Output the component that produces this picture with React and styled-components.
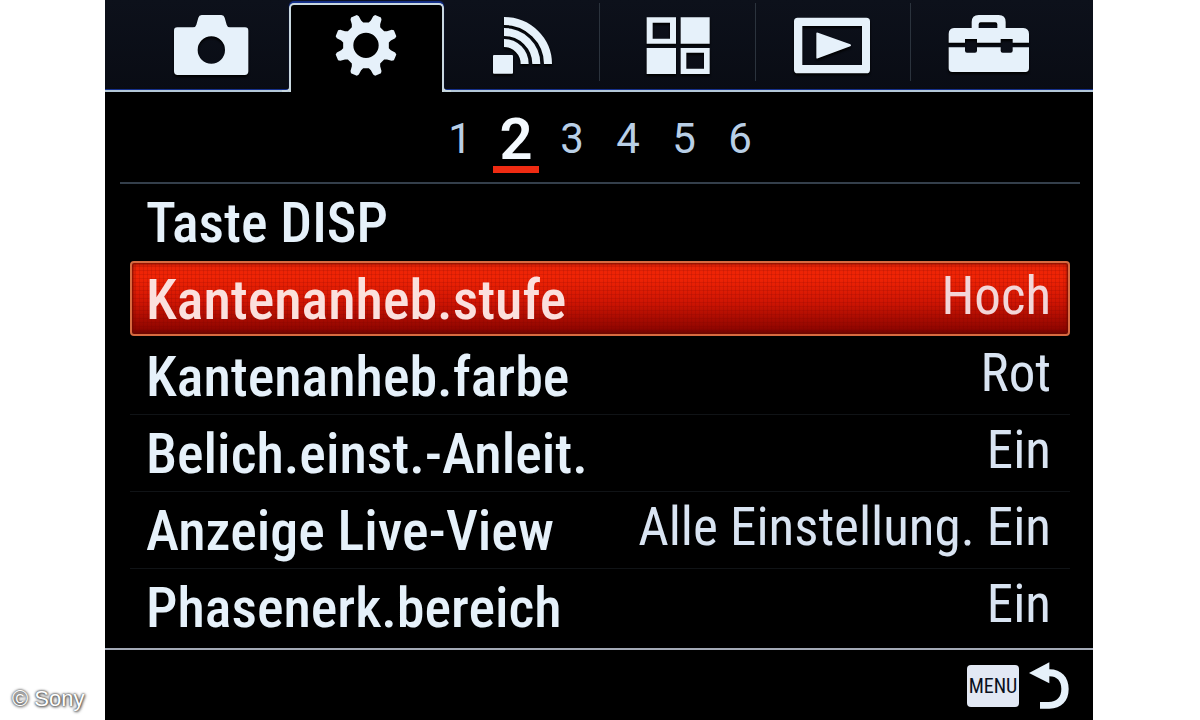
import React, { useState } from "react";
import styled, { createGlobalStyle, css } from "styled-components";

const ink = "#e6f1fa";
const narrow = `"Roboto Condensed", "Arial Narrow", "Liberation Sans", sans-serif`;
const regular = `Roboto, "Liberation Sans", Arial, sans-serif`;

const GlobalStyle = createGlobalStyle`
  * { box-sizing: border-box; }
  body { margin: 0; background: #fff; font-family: ${regular}; }
  button { margin: 0; padding: 0; border: 0; background: none; color: inherit; font: inherit; cursor: pointer; }
`;

const Page = styled.div`
  position: relative;
  min-height: 100vh;
  padding: 0 107px 0 105px;
  display: flex;
`;

const Screen = styled.main`
  flex: 1;
  min-width: 0;
  display: flex;
  flex-direction: column;
  background: #000;
  color: ${ink};
`;

const TabBar = styled.nav`
  display: grid;
  grid-template-columns: repeat(6, 1fr);
  height: 92px;
  padding: 0 26px 0 28px;
  background: linear-gradient(#0d111b, #090c14);
  box-shadow: inset 0 -2px #b4c8d8, inset 0 -3px #15308a;
`;

const activeTab = css`
  margin-top: 3px;
  background: #000;
  border: 2px solid #c9d8e0;
  border-bottom: 0;
  border-radius: 5px 5px 0 0;
  box-shadow: 0 -2px 1px #14308c;

  &::before,
  &::after {
    content: "";
    position: absolute;
    bottom: 0;
    width: 7px;
    height: 7px;
    border-bottom: 2px solid #c9d8e0;
  }
  &::before {
    right: 100%;
    border-right: 2px solid #c9d8e0;
    border-bottom-right-radius: 5px;
  }
  &::after {
    left: 100%;
    border-left: 2px solid #c9d8e0;
    border-bottom-left-radius: 5px;
  }
`;

const Tab = styled.button`
  position: relative;
  display: flex;
  justify-content: center;
  align-items: flex-start;

  svg {
    margin-top: ${(p) => (p.$active ? 8 : 13)}px;
    filter: drop-shadow(0 2px 1px #000);
  }
  ${(p) => p.$active && activeTab}
`;

const Divider = styled.span`
  position: absolute;
  right: 0;
  top: 3px;
  width: 1px;
  height: 78px;
  background: #2b333d;
`;

const Pager = styled.div`
  display: flex;
  justify-content: center;
  height: 92px;
  margin: 0 13px 0 15px;
  padding-top: 19px;
  border-bottom: 2px solid #343f4b;
`;

const PageButton = styled.button`
  display: flex;
  justify-content: center;
  width: 56px;
  color: ${(p) => (p.$active ? "#f4faff" : "#b9cfe6")};

  span {
    width: 46px;
    height: 62px;
    font-size: ${(p) => (p.$active ? 58 : 42)}px;
    font-weight: ${(p) => (p.$active ? 600 : 400)};
    line-height: 56px;
    border-bottom: 7px solid ${(p) => (p.$active ? "#ef2b12" : "transparent")};
  }
`;

const List = styled.ul`
  list-style: none;
  margin: 0;
  padding: 0 23px 2px 25px;
`;

const Item = styled.li`
  height: 77px;
  border-bottom: 1px solid ${(p) => (p.$line ? "#101316" : "transparent")};
`;

const Row = styled.button`
  display: flex;
  justify-content: space-between;
  align-items: flex-start;
  width: 100%;
  height: 75px;
  padding: 0 17px 0 14px;
  border: 2px solid transparent;
  border-radius: 4px;
  font-family: ${narrow};
  white-space: nowrap;
  text-align: left;

  ${(p) =>
    p.$selected &&
    css`
      border-color: #d86a40;
      color: #fbe0dd;
      background:
        repeating-linear-gradient(90deg, #0000 0 3px, #70000026 3px 4px),
        repeating-linear-gradient(#0000 0 3px, #70000026 3px 4px),
        linear-gradient(#e92407, #f02405 20%, #cf1503 55%, #920600 92%, #700300);
      background-clip: padding-box;
      box-shadow: inset 0 0 3px 1px #6c0a00;
    `}
`;

const Label = styled.span`
  font-size: 56px;
  font-weight: 500;
  line-height: 74px;
`;

const Value = styled.span`
  font-size: 53px;
  line-height: 66px;
  color: ${(p) => (p.$selected ? "#f3d6d8" : "#d9e4f2")};
`;

const Footer = styled.footer`
  flex: 1;
  display: flex;
  justify-content: flex-end;
  align-items: flex-start;
  min-height: 72px;
  padding: 12px 24px 0 0;
  border-top: 2px solid #a3a9b6;
`;

const BackButton = styled.button`
  display: flex;
  align-items: center;
  gap: 10px;
`;

const MenuBadge = styled.span`
  width: 52px;
  border-radius: 4px;
  background: #e2e8f4;
  color: #0a1020;
  font-family: ${narrow};
  font-size: 20px;
  line-height: 42px;
  text-align: center;
`;

const Credit = styled.small`
  position: absolute;
  left: 12px;
  bottom: 9px;
  color: #fff;
  font-family: "Liberation Sans", Arial, sans-serif;
  font-size: 22px;
  line-height: 24px;
  text-shadow: 0 0 2px #444, 0 0 3px #555, 1px 1px 3px #666;
`;

const Icon = ({ x, children }) => (
  <svg width="84" height="64" viewBox={`${x} 39 252 192`} fill={ink} aria-hidden="true">
    {children}
  </svg>
);

const CameraIcon = () => (
  <Icon x={207}>
    <path
      fillRule="evenodd"
      d="M232 82H279Q287 82 289 74L295 53Q297 45 305 45H364Q372 45 374 53L380 74Q382 82 390 82H435Q445 82 445 92V214Q445 225 434 225H233Q222 225 222 214V92Q222 82 232 82ZM334 109A41 41 0 1 0 334 191A41 41 0 1 0 334 109Z"
    />
  </Icon>
);

const point = (radius, angle) =>
  `${(802 + radius * Math.cos(angle)).toFixed(1)} ${(136 + radius * Math.sin(angle)).toFixed(1)}`;

const gearOutline = Array.from({ length: 8 }, (_, i) => {
  const a = ((i + 0.5) * Math.PI) / 4;
  return [
    point(69, a - 0.27),
    point(76, a - 0.2),
    point(90, a - 0.15),
    point(95, a - 0.1),
    point(95, a + 0.1),
    point(90, a + 0.15),
    point(76, a + 0.2),
    point(69, a + 0.27),
  ].join("L");
}).join("L");

const GearIcon = () => (
  <Icon x={676}>
    <path
      fillRule="evenodd"
      d={`M${gearOutline}ZM802 98A38 38 0 1 0 802 174A38 38 0 1 0 802 98Z`}
    />
  </Icon>
);

const WirelessIcon = () => (
  <Icon x={93}>
    <rect x="132" y="165" width="60" height="56" rx="3" />
    <g fill="none" stroke={ink} strokeWidth="24">
      <path d="M165 63A132 129 0 0 1 297 192" />
      <path d="M165 96A97 96 0 0 1 262 192" />
      <path d="M165 129A62 63 0 0 1 227 192" />
    </g>
  </Icon>
);

const AppsIcon = () => (
  <Icon x={558}>
    <path
      fillRule="evenodd"
      d="M590 52H678V131H590ZM608 68V116H660V68ZM692 52H779V131H692ZM590 144H678V222H590ZM692 144H779V222H692ZM709 158V206H762V158Z"
    />
  </Icon>
);

const PlaybackIcon = () => (
  <Icon x={96}>
    <path
      fillRule="evenodd"
      d="M116 53H322Q333 53 333 64V209Q333 220 322 220H116Q105 220 105 209V64Q105 53 116 53ZM130 78V195H309V78Z"
    />
    <path d="M172 100Q172 96 177 98L274 133Q279 136 274 139L177 175Q172 177 172 173Z" />
  </Icon>
);

const ToolboxIcon = () => (
  <Icon x={561}>
    <path
      fillRule="evenodd"
      d="M582 84H635V66Q635 45 656 45H716Q737 45 737 66V84H790Q807 86 807 102V128H758V117H722V128H651V117H615V128H566V102Q566 86 582 84ZM656 84H712V73Q712 67 706 67H662Q656 67 656 73Z"
    />
    <path d="M566 142H615V152Q615 158 621 158H645Q651 158 651 152V142H722V152Q722 158 728 158H752Q758 158 758 152V142H807V205Q807 216 796 216H577Q566 216 566 205Z" />
  </Icon>
);

const BackIcon = () => (
  <svg width="40" height="48" viewBox="388 95 120 144" fill={ink} aria-hidden="true">
    <path d="M388 128L449 96V117C486 117 507 141 507 176C507 212 485 235 449 235H421V215H447C471 215 485 200 485 176C485 152 472 138 449 138V159Z" />
  </svg>
);

const tabs = [
  { name: "Kamera", icon: CameraIcon },
  { name: "Benutzereinstellungen", icon: GearIcon },
  { name: "Drahtlos", icon: WirelessIcon, divider: true },
  { name: "Applikation", icon: AppsIcon, divider: true },
  { name: "Wiedergabe", icon: PlaybackIcon, divider: true },
  { name: "Einstellung", icon: ToolboxIcon },
];

const settings = [
  { label: "Taste DISP" },
  { label: "Kantenanheb.stufe", value: "Hoch" },
  { label: "Kantenanheb.farbe", value: "Rot", line: true },
  { label: "Belich.einst.-Anleit.", value: "Ein", line: true },
  { label: "Anzeige Live-View", value: "Alle Einstellung. Ein", line: true },
  { label: "Phasenerk.bereich", value: "Ein" },
];

export default function App() {
  const [tab, setTab] = useState(1);
  const [page, setPage] = useState(2);
  const [selected, setSelected] = useState(1);

  return (
    <>
      <GlobalStyle />
      <Page>
        <Screen>
          <TabBar>
            {tabs.map(({ name, icon: TabIcon, divider }, i) => (
              <Tab key={name} type="button" aria-label={name} $active={i === tab} onClick={() => setTab(i)}>
                <TabIcon />
                {divider && <Divider />}
              </Tab>
            ))}
          </TabBar>
          <Pager>
            {[1, 2, 3, 4, 5, 6].map((n) => (
              <PageButton key={n} type="button" $active={n === page} onClick={() => setPage(n)}>
                <span>{n}</span>
              </PageButton>
            ))}
          </Pager>
          <List>
            {settings.map(({ label, value, line }, i) => (
              <Item key={label} $line={line}>
                <Row type="button" $selected={i === selected} onClick={() => setSelected(i)}>
                  <Label>{label}</Label>
                  {value && <Value $selected={i === selected}>{value}</Value>}
                </Row>
              </Item>
            ))}
          </List>
          <Footer>
            <BackButton type="button">
              <MenuBadge>MENU</MenuBadge>
              <BackIcon />
            </BackButton>
          </Footer>
        </Screen>
        <Credit>© Sony</Credit>
      </Page>
    </>
  );
}
